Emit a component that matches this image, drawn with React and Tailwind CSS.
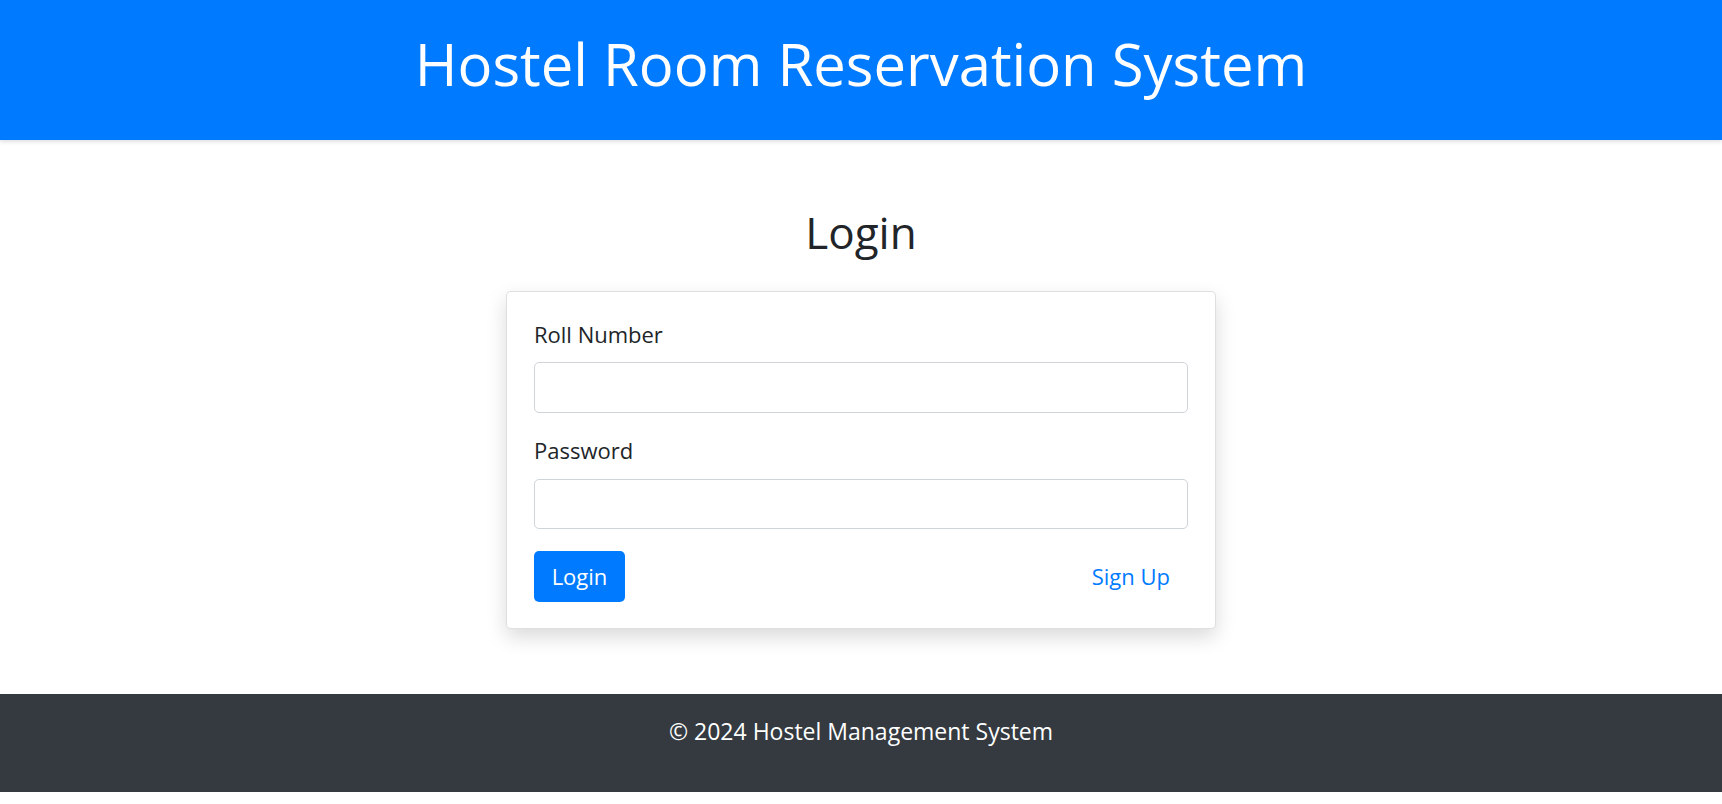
import React, { useState } from "react";

function App() {
  const [rollNumber, setRollNumber] = useState("");
  const [password, setPassword] = useState("");

  return (
    <div
      className="w-full bg-white text-[#212529]"
      style={{ fontFamily: '"Open Sans", "Liberation Sans", sans-serif' }}
    >
      {/* Header */}
      <header className="h-[140px] bg-[#007bff] shadow-[0_2px_4px_rgba(0,0,0,0.12)] flex items-center justify-center pb-[12px]">
        <h1 className="text-white text-[58px] font-normal leading-[68px]">
          Hostel Room Reservation System
        </h1>
      </header>

      {/* Login */}
      <main className="flex flex-col items-center">
        <h2 className="mt-[66px] mb-[33px] text-[44px] leading-[52px] font-normal">
          Login
        </h2>

        <div className="w-[710px] bg-white border border-[rgba(0,0,0,0.125)] rounded-[5px] shadow-[0_8px_20px_rgba(0,0,0,0.15)] px-[27px] pt-[30px] pb-[26px]">
          <label className="block text-[22px] leading-[24px] mb-[16px]">
            Roll Number
          </label>
          <input
            type="text"
            value={rollNumber}
            onChange={(e) => setRollNumber(e.target.value)}
            className="block w-full h-[51px] px-3 border border-[#ced4da] rounded-[5px] text-[18px] focus:outline-none"
          />

          <label className="block text-[22px] leading-[24px] mt-[25px] mb-[17px]">
            Password
          </label>
          <input
            type="password"
            value={password}
            onChange={(e) => setPassword(e.target.value)}
            className="block w-full h-[50px] px-3 border border-[#ced4da] rounded-[5px] text-[18px] focus:outline-none"
          />

          <div className="mt-[22px] flex items-center justify-between">
            <button className="w-[91px] h-[51px] bg-[#007bff] text-white text-[22px] rounded-[5px]">
              Login
            </button>
            <a href="#" className="text-[#007bff] text-[22px] pr-[18px]">
              Sign Up
            </a>
          </div>
        </div>
      </main>

      {/* Footer */}
      <footer className="mt-[65px] h-[98px] bg-[#343a40] text-white flex justify-center pt-[24px]">
        <p className="text-[23px] leading-[26px]">© 2024 Hostel Management System</p>
      </footer>
    </div>
  );
}

export default App;
